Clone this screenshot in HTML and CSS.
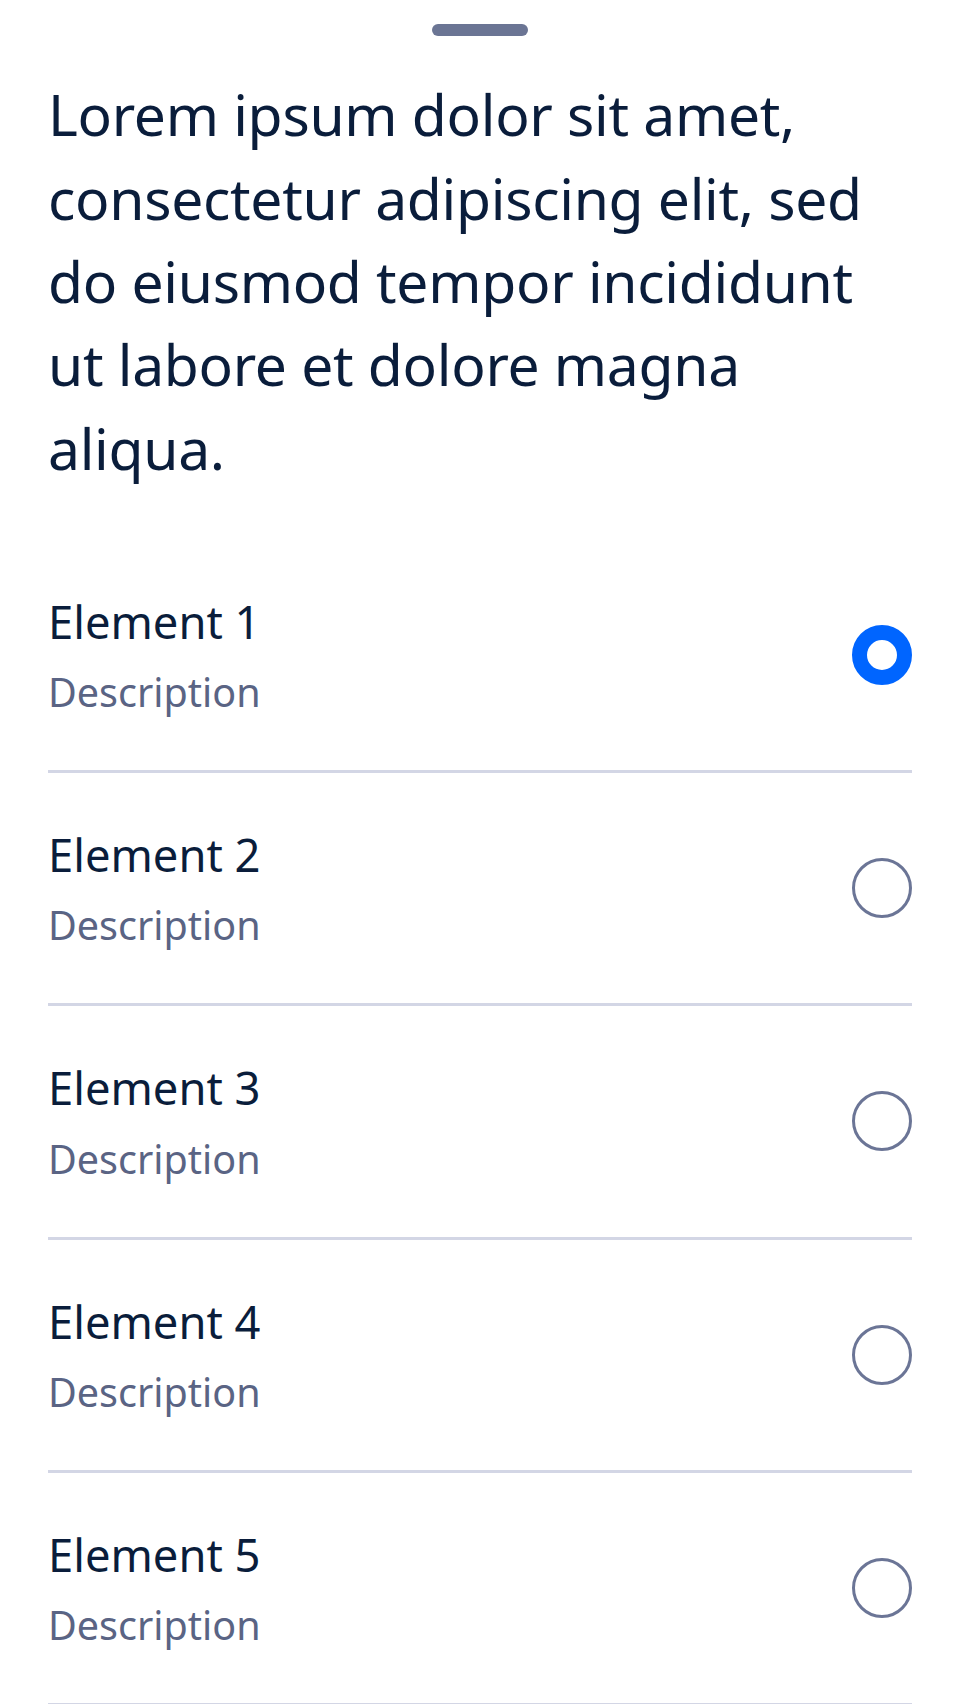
FILE: index.html
```html
<!DOCTYPE html>
<html lang="en">
<head>
<meta charset="utf-8">
<title>Bottom sheet</title>
<link rel="stylesheet" href="styles.css">
</head>
<body>
<div class="sheet">
  <div class="handle-wrap"><div class="handle"></div></div>
  <h1 class="title">Lorem ipsum dolor sit amet, consectetur adipiscing elit, sed do eiusmod tempor incididunt ut labore et dolore magna aliqua.</h1>
  <ul class="list">
    <li class="row">
      <div class="text"><div class="label">Element 1</div><div class="desc">Description</div></div>
      <span class="radio radio-on"></span>
    </li>
    <li class="row">
      <div class="text"><div class="label">Element 2</div><div class="desc">Description</div></div>
      <span class="radio"></span>
    </li>
    <li class="row">
      <div class="text"><div class="label">Element 3</div><div class="desc">Description</div></div>
      <span class="radio"></span>
    </li>
    <li class="row">
      <div class="text"><div class="label">Element 4</div><div class="desc">Description</div></div>
      <span class="radio"></span>
    </li>
    <li class="row">
      <div class="text"><div class="label">Element 5</div><div class="desc">Description</div></div>
      <span class="radio"></span>
    </li>
  </ul>
</div>
</body>
</html>
```
FILE: styles.css
```css
html, body {
  margin: 0;
  padding: 0;
  background: #ffffff;
}
body {
  font-family: "Noto Sans", "Open Sans", sans-serif;
  color: #0a1d3b;
}
.sheet {
  padding: 0 48px;
}
.handle-wrap {
  display: flex;
  justify-content: center;
  padding-top: 24px;
}
.handle {
  width: 96px;
  height: 12px;
  border-radius: 6px;
  background: #6b7594;
}
.title {
  margin: 37.2px 0 0;
  font-size: 57px;
  line-height: 83.33px;
  letter-spacing: -0.3px;
  font-weight: 400;
  color: #0a1d3b;
}
.list {
  list-style: none;
  margin: 49.8px 0 0;
  padding: 0;
}
.row {
  display: flex;
  align-items: center;
  justify-content: space-between;
  height: 230.33px;
  border-bottom: 3px solid #d3d6e5;
}
.text {
  display: flex;
  flex-direction: column;
  gap: 14.33px;
}
.label {
  font-size: 45.33px;
  line-height: 60px;
  color: #0a1d3b;
}
.desc {
  font-size: 39.5px;
  line-height: 52px;
  color: #5a6484;
}
.radio {
  flex: none;
  width: 60px;
  height: 60px;
  box-sizing: border-box;
  border-radius: 50%;
  border: 3px solid #6b7596;
  background: #ffffff;
}
.radio-on {
  border: 15px solid #0065ff;
}
```
